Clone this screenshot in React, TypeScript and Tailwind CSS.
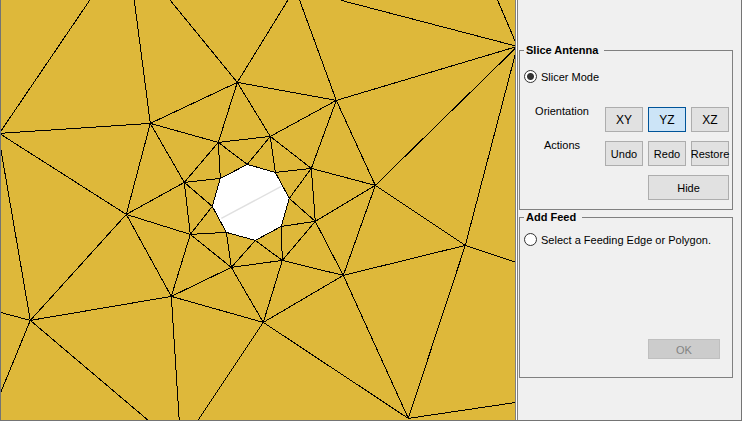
import React, { useState } from 'react';
import clsx from 'clsx';

type Point = [number, number];
type Plane = 'XY' | 'YZ' | 'XZ';

const PLANES: Plane[] = ['XY', 'YZ', 'XZ'];

// Rings of mesh nodes around the hole, from the outside in
const OUTER: Point[] = [[237, 82], [336, 100], [375, 185], [343, 275], [263, 322], [171, 296], [126, 214], [150, 123]];
const MIDDLE: Point[] = [[218, 142], [270, 136], [311, 168], [315, 221], [282, 260], [231, 267], [190, 234], [184, 182]];
const HOLE: Point[] = [[247, 164], [275, 172], [289, 198], [281, 226], [255, 240], [226, 232], [212, 206], [220, 178]];

const R: Point = [517, 46];
const Q: Point = [465, 245];
const S: Point = [408, 418];
const T: Point = [30, 320];
const L: Point = [-1, 133];

// Edges from the outer ring to the far nodes and the plate boundary
const FAR: [Point, Point][] = [
  [L, [90, -1]],
  [[134, 0], OUTER[7]],
  [[170, 0], OUTER[0]],
  [OUTER[0], [288, -1]],
  [[299, -1], OUTER[1]],
  [[341, 0], R],
  [[497, -1], R],
  [OUTER[1], R],
  [OUTER[2], R],
  [R, Q],
  [OUTER[2], Q],
  [OUTER[3], Q],
  [Q, [516, 262]],
  [Q, S],
  [OUTER[3], S],
  [OUTER[4], S],
  [S, [516, 402]],
  [OUTER[4], [197, 421]],
  [OUTER[5], [179, 421]],
  [OUTER[5], T],
  [OUTER[6], T],
  [T, [148, 420]],
  [T, [0, 393]],
  [T, [0, 312]],
  [T, [-1, 140]],
  [L, OUTER[6]],
  [L, OUTER[7]],
];

const edge = (a: Point, b: Point) => `M${a[0]} ${a[1]}L${b[0]} ${b[1]}`;

const ring = (points: Point[]) => points.map((p, i) => edge(p, points[(i + 1) % points.length]));

const meshPath = [
  ...FAR.map(([a, b]) => edge(a, b)),
  ...ring(OUTER),
  ...ring(MIDDLE),
  ...ring(HOLE),
  ...MIDDLE.flatMap((p, i) => [
    edge(OUTER[i], p),
    edge(OUTER[(i + 7) % 8], p),
    edge(p, HOLE[i]),
    edge(p, HOLE[(i + 7) % 8]),
  ]),
].join('');

function MeshView() {
  return (
    <svg
      viewBox="1 0 514 420"
      preserveAspectRatio="xMidYMid slice"
      className="absolute inset-0 h-full w-full"
      role="img"
      aria-label="Antenna mesh"
    >
      <g transform="translate(0.3 0.4)" fill="none">
        <polygon points={HOLE.join(' ')} fill="#ffffff" />
        <path d="M221 218L281 186" stroke="#e0e0e0" strokeWidth="1.4" />
        <path d={meshPath} stroke="#000000" shapeRendering="crispEdges" />
      </g>
    </svg>
  );
}

interface ToolButtonProps {
  children: React.ReactNode;
  active?: boolean;
  wide?: boolean;
  large?: boolean;
  onClick?: () => void;
}

function ToolButton({ children, active, wide, large, onClick }: ToolButtonProps) {
  return (
    <button
      type="button"
      onClick={onClick}
      className={clsx(
        'flex h-[25px] items-center justify-center whitespace-nowrap border pt-0.5',
        active ? 'border-[#005499] bg-[#cce4f7]' : 'border-[#adadad] bg-[#e1e1e1]',
        wide && 'col-span-2 col-start-3',
        large && 'text-[12px]'
      )}
    >
      {children}
    </button>
  );
}

interface ModeRadioProps {
  label: string;
  checked: boolean;
  onChange: () => void;
}

function ModeRadio({ label, checked, onChange }: ModeRadioProps) {
  return (
    <label className="ml-1 flex h-[13px] items-start gap-1">
      <input
        type="radio"
        name="mode"
        checked={checked}
        onChange={onChange}
        className="size-[13px] shrink-0 appearance-none rounded-full border border-[#333333] bg-white bg-clip-padding checked:bg-[radial-gradient(circle,#333333_3px,#ffffff_4px)]"
      />
      {label}
    </label>
  );
}

function App() {
  const [mode, setMode] = useState<'slice' | 'feed'>('slice');
  const [plane, setPlane] = useState<Plane>('YZ');

  return (
    <div className="flex min-h-screen border-x border-b border-[#747474] bg-[#f0f0f0] font-['Liberation_Sans',Arial,sans-serif] text-[11px] leading-[15px] text-black">
      <main className="relative flex-1 overflow-hidden bg-[#deb83a]">
        <MeshView />
      </main>

      <aside className="w-[226px] shrink-0 border-l border-[#808080]">
        <div className="h-full border-l border-white">
          <div className="h-full border-l border-[#808080] pl-px pr-2 pt-[43px]">
            <fieldset className="border border-[#808080] pb-[9px]">
              <legend className="ml-1 pl-0.5 pr-1.5 font-bold">Slice Antenna</legend>
              <div className="pt-3">
                <ModeRadio label="Slicer Mode" checked={mode === 'slice'} onChange={() => setMode('slice')} />
              </div>
              <div className="mt-6 grid grid-cols-[1fr_38px_38px_38px] gap-x-[5px] gap-y-[9px] pr-[3px]">
                <span className="pl-1 text-center leading-[8px]">Orientation</span>
                {PLANES.map((p) => (
                  <ToolButton key={p} large active={p === plane} onClick={() => setPlane(p)}>
                    {p}
                  </ToolButton>
                ))}
                <span className="pl-1 text-center leading-[8px]">Actions</span>
                <ToolButton>Undo</ToolButton>
                <ToolButton>Redo</ToolButton>
                <ToolButton>Restore</ToolButton>
                <ToolButton wide>Hide</ToolButton>
              </div>
            </fieldset>

            <fieldset className="border border-[#808080] pb-[18px]">
              <legend className="ml-1 pl-0.5 pr-1.5 font-bold">Add Feed</legend>
              <div className="pt-2">
                <ModeRadio
                  label="Select a Feeding Edge or Polygon."
                  checked={mode === 'feed'}
                  onChange={() => setMode('feed')}
                />
              </div>
              <div className="mt-[93px] flex justify-end pr-3">
                <button
                  type="button"
                  disabled={mode !== 'feed'}
                  className="flex h-5 w-[72px] items-center justify-center border border-[#bfbfbf] bg-[#cccccc] pt-0.5 text-[#838383]"
                >
                  OK
                </button>
              </div>
            </fieldset>
          </div>
        </div>
      </aside>
    </div>
  );
}

export default App;
